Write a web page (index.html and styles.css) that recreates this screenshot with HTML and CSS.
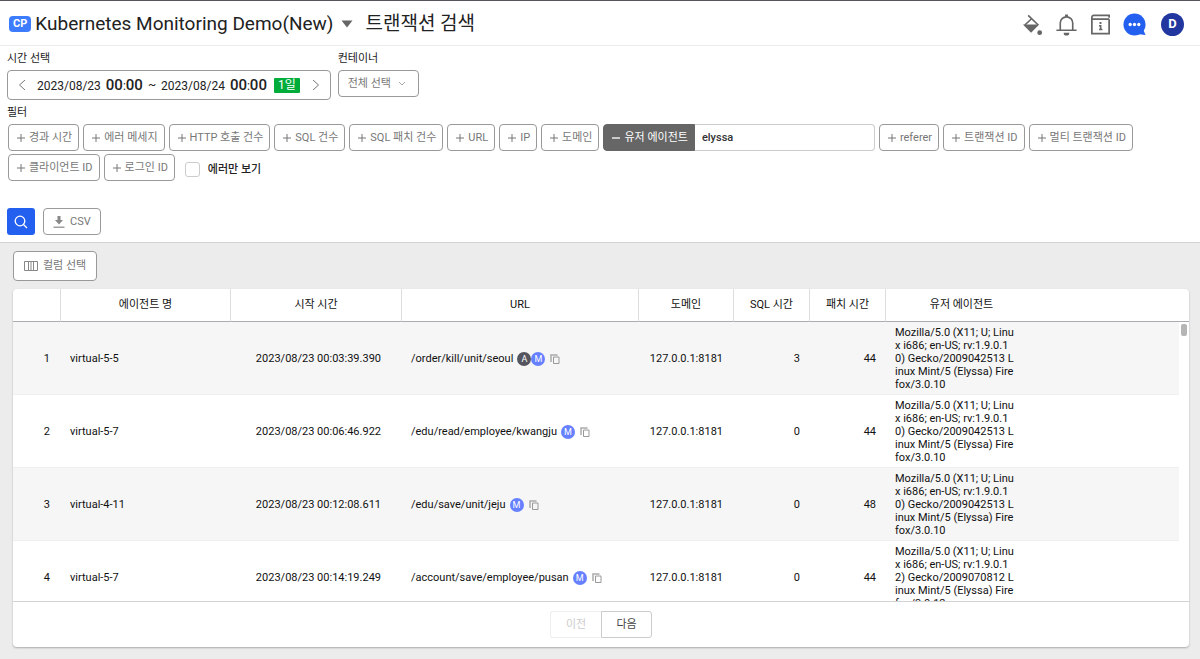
FILE: index.html
```html
<!DOCTYPE html>
<html lang="ko">
<head>
<meta charset="utf-8">
<meta name="viewport" content="width=device-width, initial-scale=1">
<title>트랜잭션 검색</title>
<link rel="stylesheet" href="styles.css">
</head>
<body>
<svg class="defs" aria-hidden="true">
  <symbol id="plus" viewBox="0 0 10 10"><path d="M5 1v8M1 5h8" fill="none" stroke="currentColor"/></symbol>
  <symbol id="copy" viewBox="0 0 10 10"><path d="M1 8V1h6.500" fill="none" stroke="#aaa" stroke-width="1.500"/><path d="M3.500 3h5.500v6.500H3.500z" fill="none" stroke="#999"/></symbol>
</svg>

<header class="topbar">
  <button class="project" type="button">
    <span class="project-tag">CP</span>
    <span class="project-name">Kubernetes Monitoring Demo(New)</span>
    <svg class="caret" viewBox="0 0 12 8"><path d="M.5.5h11L6 7.500z" fill="#666"/></svg>
  </button>
  <h1 class="page-title">트랜잭션 검색</h1>
  <nav class="tools">
    <button class="tool" type="button" aria-label="테마">
      <svg viewBox="0 0 24 24"><path d="M7.500 2.500 18 12.500M11 6 4 12.500" fill="none" stroke="#666" stroke-width="1.700"/><path d="M2 12h17L10.500 20.500z" fill="#666"/><circle cx="19.500" cy="20.500" r="2.500" fill="#666"/></svg>
    </button>
    <button class="tool" type="button" aria-label="알림">
      <svg viewBox="0 0 24 24"><path d="M1.500 18h21M5.500 18v-7.500a6.500 6.500 0 0 1 13 0V18" fill="none" stroke="#666" stroke-width="1.700"/><path d="M10.500 4V1.500h3V4zM9 20.500h6a3 3 0 0 1-6 0z" fill="#666"/></svg>
    </button>
    <button class="tool" type="button" aria-label="정보">
      <svg viewBox="0 0 24 24"><path d="M21 6.500V21.500H3V4.500a2 2 0 0 1 2-2H21v2.500M3.500 6.500H21" fill="none" stroke="#666" stroke-width="1.800"/><path d="M11 9.500h2v2h-2zM10.500 12.500H13v4h1v1.500h-3.500v-1.500h.8v-2.500h-.8z" fill="#666"/></svg>
    </button>
    <button class="tool" type="button" aria-label="채팅">
      <svg viewBox="0 0 24 24"><circle cx="12" cy="12" r="11.500" fill="#2460f0"/><path d="M15 22l8.500 1-2.500-6z" fill="#2460f0"/><circle cx="7.500" cy="12" r="1.700" fill="#fff"/><circle cx="12" cy="12" r="1.700" fill="#fff"/><circle cx="16.500" cy="12" r="1.700" fill="#fff"/></svg>
    </button>
    <button class="tool avatar" type="button">D</button>
  </nav>
</header>

<main class="page">
  <form class="search">
    <div class="fields">
      <div class="field">
        <span class="label">시간 선택</span>
        <div class="range">
          <button class="step" type="button" aria-label="이전 기간"><svg viewBox="0 0 8 12"><path d="M7 1 1.500 6 7 11" fill="none" stroke="#777"/></svg></button>
          <span class="moment">2023/08/23 <span class="clock"><b>00</b>:<b>00</b></span></span>
          <span class="tilde">~</span>
          <span class="moment">2023/08/24 <span class="clock"><b>00</b>:<b>00</b></span></span>
          <span class="period">1일</span>
          <button class="step" type="button" aria-label="다음 기간"><svg viewBox="0 0 8 12"><path d="M1 1l5.500 5L1 11" fill="none" stroke="#777"/></svg></button>
        </div>
      </div>
      <div class="field">
        <label class="label" for="container">컨테이너</label>
        <div class="select-wrap">
          <select class="select" id="container"><option>전체 선택</option></select>
          <svg class="select-arrow" viewBox="0 0 8 6"><path d="M1 1l3 3 3-3" fill="none" stroke="#aaa"/></svg>
        </div>
      </div>
    </div>

    <span class="label filter-label">필터</span>
    <div class="chips">
      <button class="chip" type="button"><svg><use href="#plus"/></svg>경과 시간</button>
      <button class="chip" type="button"><svg><use href="#plus"/></svg>에러 메세지</button>
      <button class="chip" type="button"><svg><use href="#plus"/></svg>HTTP 호출 건수</button>
      <button class="chip" type="button"><svg><use href="#plus"/></svg>SQL 건수</button>
      <button class="chip" type="button"><svg><use href="#plus"/></svg>SQL 패치 건수</button>
      <button class="chip" type="button"><svg><use href="#plus"/></svg>URL</button>
      <button class="chip" type="button"><svg><use href="#plus"/></svg>IP</button>
      <button class="chip" type="button"><svg><use href="#plus"/></svg>도메인</button>
      <div class="active-filter">
        <button class="chip chip-on" type="button"><svg viewBox="0 0 10 10"><path d="M1 5h8" stroke="currentColor" stroke-width="1.300"/></svg>유저 에이전트</button>
        <input class="filter-input" type="text" value="elyssa" aria-label="유저 에이전트">
      </div>
      <button class="chip" type="button"><svg><use href="#plus"/></svg>referer</button>
      <button class="chip" type="button"><svg><use href="#plus"/></svg>트랜잭션 ID</button>
      <button class="chip" type="button"><svg><use href="#plus"/></svg>멀티 트랜잭션 ID</button>
      <button class="chip" type="button"><svg><use href="#plus"/></svg>클라이언트 ID</button>
      <button class="chip" type="button"><svg><use href="#plus"/></svg>로그인 ID</button>
      <label class="only-errors"><input class="check" type="checkbox">에러만 보기</label>
    </div>

    <div class="actions">
      <button class="go" type="submit" aria-label="검색"><svg viewBox="0 0 14 14"><circle cx="6" cy="6" r="4.800" fill="none" stroke="#fff" stroke-width="1.300"/><path d="M9.500 9.500 13 13" stroke="#fff" stroke-width="1.300"/></svg></button>
      <button class="csv" type="button"><svg viewBox="0 0 12 12"><path d="M4.500 0h3v4H10L6 8.500 2 4h2.500z" fill="#888"/><path d="M.5 11.200h11" stroke="#888" stroke-width="1.200"/></svg>CSV</button>
    </div>
  </form>

  <section class="results">
    <button class="columns" type="button"><svg viewBox="0 0 14 12"><path d="M.5 1.500h13v9H.5zM4.500 1.500v9M9.500 1.500v9M7 1.500v9" fill="none" stroke="#888"/></svg>컬럼 선택</button>
    <div class="card">
      <div class="scroller">
        <table class="grid">
          <colgroup><col class="c-no"><col class="c-agent"><col class="c-start"><col class="c-url"><col class="c-domain"><col class="c-num"><col class="c-num"><col class="c-ua"><col><col class="c-gutter"></colgroup>
          <thead>
            <tr><th></th><th>에이전트 명</th><th>시작 시간</th><th>URL</th><th>도메인</th><th>SQL 시간</th><th>패치 시간</th><th>유저 에이전트</th><th></th><th></th></tr>
          </thead>
          <tbody>
            <tr><td class="r">1</td><td>virtual-5-5</td><td class="r start">2023/08/23 00:03:39.390</td><td><div class="url">/order/kill/unit/seoul<span class="badges"><i class="badge dark">A</i><i class="badge">M</i></span><svg><use href="#copy"/></svg></div></td><td class="r">127.0.0.1:8181</td><td class="r">3</td><td class="r">44</td><td>Mozilla/5.0 (X11; U; Linu<br>x i686; en-US; rv:1.9.0.1<br>0) Gecko/2009042513 L<br>inux Mint/5 (Elyssa) Fire<br>fox/3.0.10</td><td></td><td></td></tr>
            <tr><td class="r">2</td><td>virtual-5-7</td><td class="r start">2023/08/23 00:06:46.922</td><td><div class="url">/edu/read/employee/kwangju<span class="badges"><i class="badge">M</i></span><svg><use href="#copy"/></svg></div></td><td class="r">127.0.0.1:8181</td><td class="r">0</td><td class="r">44</td><td>Mozilla/5.0 (X11; U; Linu<br>x i686; en-US; rv:1.9.0.1<br>0) Gecko/2009042513 L<br>inux Mint/5 (Elyssa) Fire<br>fox/3.0.10</td><td></td><td></td></tr>
            <tr><td class="r">3</td><td>virtual-4-11</td><td class="r start">2023/08/23 00:12:08.611</td><td><div class="url">/edu/save/unit/jeju<span class="badges"><i class="badge">M</i></span><svg><use href="#copy"/></svg></div></td><td class="r">127.0.0.1:8181</td><td class="r">0</td><td class="r">48</td><td>Mozilla/5.0 (X11; U; Linu<br>x i686; en-US; rv:1.9.0.1<br>0) Gecko/2009042513 L<br>inux Mint/5 (Elyssa) Fire<br>fox/3.0.10</td><td></td><td></td></tr>
            <tr><td class="r">4</td><td>virtual-5-7</td><td class="r start">2023/08/23 00:14:19.249</td><td><div class="url">/account/save/employee/pusan<span class="badges"><i class="badge">M</i></span><svg><use href="#copy"/></svg></div></td><td class="r">127.0.0.1:8181</td><td class="r">0</td><td class="r">44</td><td>Mozilla/5.0 (X11; U; Linu<br>x i686; en-US; rv:1.9.0.1<br>2) Gecko/2009070812 L<br>inux Mint/5 (Elyssa) Fire<br>fox/3.0.12</td><td></td><td></td></tr>
          </tbody>
        </table>
        <div class="thumb"></div>
      </div>
      <div class="pager">
        <button class="page-btn" type="button" disabled>이전</button>
        <button class="page-btn" type="button">다음</button>
      </div>
    </div>
  </section>
</main>
</body>
</html>
```
FILE: styles.css
```css
* { box-sizing: border-box; }
body {
  margin: 0;
  height: 100vh;
  display: flex;
  flex-direction: column;
  overflow: hidden;
  background: #fff;
  color: #222;
  font: 11px/16px Roboto, "Noto Sans CJK KR", sans-serif;
}
button, input, select { font: inherit; color: inherit; margin: 0; }
button { display: flex; align-items: center; justify-content: center; padding: 0; border: 0; background: none; white-space: nowrap; cursor: pointer; }
svg { flex: none; display: block; }
.defs { position: absolute; width: 0; height: 0; }

.topbar {
  display: flex;
  align-items: center;
  height: 46px;
  flex: none;
  padding: 2px 16px 0 9px;
  border-top: 1px solid #55555c;
  border-bottom: 1px solid #ececec;
}
.project { gap: 4px; }
.project-tag { padding: 0 4px; border-radius: 4px; background: #3d7bff; color: #fff; font-size: 11px; font-weight: 700; line-height: 16px; }
.project-name { font-size: 19px; line-height: 28px; }
.caret { width: 12px; height: 8px; margin-left: 4px; }
.page-title { margin: 0 0 0 12px; font-size: 19px; line-height: 28px; font-weight: 400; }
.tools { display: flex; gap: 11px; margin-left: auto; }
.tool { width: 23px; height: 23px; }
.tool svg { width: 23px; height: 23px; }
.avatar { border-radius: 50%; background: #2236a0; color: #fff; font-size: 13px; font-weight: 700; margin-left: 4px; }

.page { flex: 1; min-height: 0; display: flex; flex-direction: column; }
.search { padding: 5px 7px 7px; border-bottom: 1px solid #d2d2d2; }
.fields { display: flex; align-items: flex-start; gap: 7px; }
.label { display: block; line-height: 16px; padding-bottom: 3px; }
.filter-label { padding: 5px 0 3px; }
.range { display: flex; align-items: center; height: 30px; padding: 0 8px; border: 1px solid #999; border-radius: 4px; font-size: 12px; white-space: nowrap; }
.step { width: 12px; }
.step svg { width: 8px; height: 12px; }
.clock { margin-left: 2px; }
.clock b { font-size: 15px; font-weight: 500; }
.moment { margin-left: 9px; }
.tilde { margin: 0 -4px 0 5px; }
.period { margin: 0 10px 0 7px; padding: 0 4px; border-radius: 1px; background: #00ac3a; color: #fff; line-height: 15px; }
.select-wrap { position: relative; width: 81px; }
.select { width: 100%; height: 27px; padding: 0 9px; border: 1px solid #999; border-radius: 4px; background: #fff; color: #777; appearance: none; }
.select-arrow { position: absolute; right: 13px; top: 11px; width: 8px; height: 6px; pointer-events: none; }

.chips { display: flex; flex-wrap: wrap; gap: 3px 4px; padding-left: 1px; }
.chip { gap: 3px; height: 27px; padding: 0 6px 0 7px; border: 1px solid #999; border-radius: 4px; background: #fff; color: #777; }
.chip svg { width: 10px; height: 10px; }
.active-filter { display: flex; }
.chip-on { border-color: #666; border-radius: 4px 0 0 4px; background: #666; color: #fff; }
.filter-input { width: 180px; height: 27px; padding: 0 7px; border: 1px solid #ccc; border-left: 0; border-radius: 0 4px 4px 0; outline: 0; color: #333; font-weight: 500; }
.only-errors { display: flex; align-items: center; gap: 8px; margin-left: 6px; padding-top: 4px; font-weight: 500; }
.check { appearance: none; width: 15px; height: 15px; border: 1px solid #ccc; border-radius: 3px; background: #fff; }
.actions { display: flex; gap: 8px; margin-top: 27px; }
.go { width: 28px; height: 27px; border-radius: 3px; background: #2460f0; }
.go svg { width: 14px; height: 14px; }
.csv { gap: 5px; height: 27px; padding: 0 9px; border: 1px solid #999; border-radius: 4px; color: #777; }
.csv svg { width: 12px; height: 12px; }

.results { flex: 1; min-height: 0; display: flex; flex-direction: column; align-items: flex-start; gap: 8px; padding: 8px 11px 12px 13px; background: #ececec; }
.columns { flex: none; gap: 5px; height: 30px; padding: 0 10px; border: 1px solid #999; border-radius: 4px; background: #fff; color: #777; }
.columns svg { width: 14px; height: 12px; }
.card { flex: 1; min-height: 0; width: 100%; display: flex; flex-direction: column; border-radius: 4px; background: #fff; box-shadow: 0 1px 2px #aaa; overflow: hidden; }
.scroller { position: relative; flex: 1; min-height: 0; overflow: hidden; }
.thumb { position: absolute; top: 35px; right: 2px; width: 6px; height: 12px; border-radius: 2px; background: #b5b5b5; }
.grid { width: 100%; table-layout: fixed; border-collapse: separate; border-spacing: 0; color: #111; }
.c-no { width: 47px; }
.c-agent { width: 170px; }
.c-start { width: 171px; }
.c-url { width: 237px; }
.c-domain { width: 95px; }
.c-num { width: 76px; }
.c-ua { width: 152px; }
.c-gutter { width: 10px; }
.grid th { height: 33px; padding: 0; border-bottom: 1px solid #a9adb3; border-left: 1px solid #ddd; font-weight: 400; }
.grid th:first-child, .grid th:nth-child(n+9) { border-left: 0; }
.grid td { height: 73px; padding: 4px 10px 3px; border-bottom: 1px solid #efefef; line-height: 13px; white-space: nowrap; }
.grid td:last-child { padding: 0; border-bottom: 0; background: #fff; }
.grid tbody tr:nth-child(odd) { background: #f6f6f6; }
.grid .r { text-align: right; }
.grid td.r:nth-child(n+6) { padding-right: 9px; }
.grid .start { padding-right: 20px; }
.url { display: flex; align-items: center; }
.url svg { width: 10px; height: 10px; margin-left: 5px; }
.badges { display: flex; margin-left: 4px; }
.badge { width: 14px; height: 14px; border-radius: 50%; background: #6680ff; color: #fff; font-size: 9px; font-style: normal; line-height: 14px; text-align: center; }
.dark { background: #55555f; }
.pager { flex: none; display: flex; justify-content: center; height: 46px; padding-top: 9px; border-top: 1px solid #d2d2d2; }
.page-btn { width: 51px; height: 27px; border: 1px solid #ccc; border-radius: 0 3px 3px 0; color: #444; }
.page-btn:disabled { border-color: #eee; border-right: 0; border-radius: 3px 0 0 3px; color: #ccc; }
```
